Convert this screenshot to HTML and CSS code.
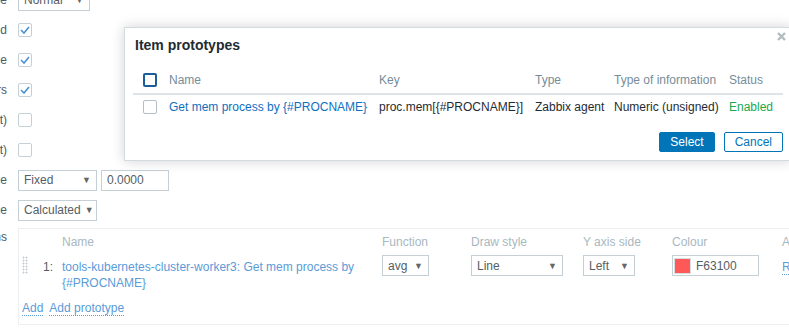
FILE: index.html
```html
<!DOCTYPE html>
<html lang="en">
<head>
  <meta charset="UTF-8">
  <title>Graph prototype</title>
  <link rel="stylesheet" href="styles.css">
</head>
<body>

<div class="form">
  <div class="row">
    <label>Graph type</label>
    <div class="select w72">Normal<span class="arrow">&#9660;</span></div>
  </div>
  <div class="row">
    <label>Show legend</label>
    <div class="cb"><svg width="10" height="8" viewBox="0 0 10 8"><path d="M1 4 L4 7 L9 1" fill="none" stroke="#4a8fd0" stroke-width="1.6"/></svg></div>
  </div>
  <div class="row">
    <label>Show working time</label>
    <div class="cb"><svg width="10" height="8" viewBox="0 0 10 8"><path d="M1 4 L4 7 L9 1" fill="none" stroke="#4a8fd0" stroke-width="1.6"/></svg></div>
  </div>
  <div class="row">
    <label>Show triggers</label>
    <div class="cb"><svg width="10" height="8" viewBox="0 0 10 8"><path d="M1 4 L4 7 L9 1" fill="none" stroke="#4a8fd0" stroke-width="1.6"/></svg></div>
  </div>
  <div class="row">
    <label>Percentile line (left)</label>
    <div class="cb"></div>
  </div>
  <div class="row">
    <label>Percentile line (right)</label>
    <div class="cb"></div>
  </div>
  <div class="row">
    <label>Y axis MIN value</label>
    <div class="controls">
      <div class="select w78">Fixed<span class="arrow">&#9660;</span></div>
      <div class="input w68">0.0000</div>
    </div>
  </div>
  <div class="row">
    <label>Y axis MAX value</label>
    <div class="select w78">Calculated<span class="arrow">&#9660;</span></div>
  </div>
  <div class="row row-items">
    <label>Items</label>
    <div class="items">
      <div class="items-grid items-head">
        <div></div>
        <div></div>
        <div>Name</div>
        <div>Function</div>
        <div>Draw style</div>
        <div>Y axis side</div>
        <div>Colour</div>
        <div>Action</div>
      </div>
      <div class="items-grid items-row">
        <div class="handle"></div>
        <div class="num">1:</div>
        <div class="item-name"><a href="#">tools-kubernetes-cluster-worker3: Get mem process by {#PROCNAME}</a></div>
        <div><div class="select w46">avg<span class="arrow">&#9660;</span></div></div>
        <div><div class="select w92">Line<span class="arrow">&#9660;</span></div></div>
        <div><div class="select w52">Left<span class="arrow">&#9660;</span></div></div>
        <div><div class="input colour w87"><span class="swatch"></span>F63100</div></div>
        <div class="num"><a href="#" class="dotted">Remove</a></div>
      </div>
      <div class="add-links">
        <a href="#" class="dotted">Add</a>
        <a href="#" class="dotted">Add prototype</a>
      </div>
    </div>
  </div>
</div>

<div class="modal">
  <h4 class="modal-title">Item prototypes</h4>
  <span class="close"><svg width="9" height="9" viewBox="0 0 9 9"><path d="M1 1 L8 8 M8 1 L1 8" stroke="#b3bcc1" stroke-width="2.4"/></svg></span>
  <table class="list">
    <colgroup>
      <col style="width:36px"><col style="width:210px"><col style="width:156px">
      <col style="width:79px"><col style="width:115px"><col style="width:54px">
    </colgroup>
    <thead>
      <tr>
        <th class="cb-cell"><span class="mcb head"></span></th>
        <th>Name</th>
        <th>Key</th>
        <th>Type</th>
        <th>Type of information</th>
        <th>Status</th>
      </tr>
    </thead>
    <tbody>
      <tr>
        <td class="cb-cell"><span class="mcb"></span></td>
        <td><a href="#">Get mem process by {#PROCNAME}</a></td>
        <td>proc.mem[{#PROCNAME}]</td>
        <td>Zabbix agent</td>
        <td>Numeric (unsigned)</td>
        <td class="green">Enabled</td>
      </tr>
    </tbody>
  </table>
  <div class="modal-footer">
    <button class="btn-main">Select</button>
    <button class="btn-alt">Cancel</button>
  </div>
</div>

</body>
</html>
```

FILE: styles.css
```css
html, body {
  margin: 0;
  overflow: hidden;
}

body {
  font-family: "Liberation Sans", Arial, sans-serif;
  font-size: 12px;
  color: #1f2c33;
  background: #fff;
  width: 789px;
  height: 331px;
  position: relative;
}

a {
  color: #5a9bd8;
  text-decoration: none;
}

.form {
  margin: -12px 0 0 -193px;
}

.row {
  display: grid;
  grid-template-columns: 200px auto;
  column-gap: 11px;
  align-items: center;
  min-height: 24px;
  margin-bottom: 6px;
}

.row label {
  text-align: right;
  color: #4f5a60;
  white-space: nowrap;
}

.row-items {
  align-items: start;
  margin-top: 4px;
}

.row-items label {
  padding-top: 2px;
}

.controls {
  display: flex;
  gap: 4px;
}

.select,
.input {
  display: flex;
  align-items: center;
  height: 21px;
  box-sizing: border-box;
  border: 1px solid #c5d0d6;
  padding: 0 5px;
  color: #555e63;
  background: #fff;
}

.select {
  justify-content: space-between;
}

.arrow {
  font-size: 9px;
  color: #666;
  margin-left: 4px;
}

.w46 { width: 47px; }
.w52 { width: 52px; }
.w68 { width: 68px; }
.w72 { width: 72px; }
.w78 { width: 79px; }
.w87 { width: 87px; }
.w92 { width: 92px; }

.cb {
  width: 14px;
  height: 14px;
  box-sizing: border-box;
  border: 1px solid #c5d0d6;
  border-radius: 2px;
  display: flex;
  align-items: center;
  justify-content: center;
}

.items {
  width: 820px;
  border: 1px solid #eceff1;
  padding: 5px 0 8px 3px;
}

.items-grid {
  display: grid;
  grid-template-columns: 21px 19px 320px 89px 112px 89px 110px 60px;
  line-height: 16px;
}

.items-head {
  color: #a9b8c0;
}

.items-row {
  margin-top: 5px;
}

.handle {
  width: 6px;
  height: 18px;
  margin-top: 1px;
  background-image: radial-gradient(circle, #c3ccd1 0.9px, transparent 1.1px);
  background-size: 3px 3px;
}

.num {
  padding-top: 4px;
  color: #555e63;
}

.item-name {
  padding: 4px 10px 0 0;
}

.colour {
  padding-left: 1px;
}

.swatch {
  width: 17px;
  height: 16px;
  background: #ff5858;
  border: 1px solid #d7dde0;
  box-sizing: border-box;
  margin-right: 5px;
}

.dotted {
  border-bottom: 1px dotted #5a9bd8;
  line-height: 14px;
}

.add-links {
  display: flex;
  gap: 6px;
  margin-top: 10px;
  line-height: 16px;
}

/* dialog */
.modal {
  position: absolute;
  left: 124px;
  top: 27px;
  width: 668px;
  box-sizing: border-box;
  background: #fff;
  border: 1px solid #d4dbdf;
  box-shadow: 0 0 12px rgba(0, 0, 0, 0.18);
  padding: 0 8px 8px;
}

.modal-title {
  font-size: 14px;
  font-weight: bold;
  line-height: 18px;
  margin: 0 0 13px;
  padding: 8px 0 0 2px;
  color: #1f2c33;
}

.close {
  position: absolute;
  top: 2px;
  right: 5px;
}

.list {
  width: 650px;
  border-collapse: collapse;
  table-layout: fixed;
}

.list th {
  text-align: left;
  font-weight: normal;
  color: #768d99;
  height: 26px;
  padding: 0;
  border-bottom: 2px solid #dde3e6;
}

.list td {
  height: 24px;
  padding: 0;
  white-space: nowrap;
}

.list a {
  color: #0f6fc0;
}

.cb-cell {
  padding-left: 10px !important;
}

.mcb {
  display: block;
  width: 14px;
  height: 14px;
  box-sizing: border-box;
  border: 1px solid #b3c0c7;
  border-radius: 2px;
}

.mcb.head {
  border: 2px solid #1c5f98;
}

.green {
  color: #1aa84a;
}

.modal-footer {
  display: flex;
  justify-content: flex-end;
  gap: 9px;
  margin-top: 13px;
}

.modal-footer button {
  height: 20px;
  font: inherit;
  padding: 0 10px;
  border-radius: 2px;
  cursor: pointer;
}

.btn-main {
  background: #0275b8;
  border: 1px solid #0275b8;
  color: #fff;
}

.btn-alt {
  background: #fff;
  border: 1px solid #0275b8;
  color: #0275b8;
}
```
